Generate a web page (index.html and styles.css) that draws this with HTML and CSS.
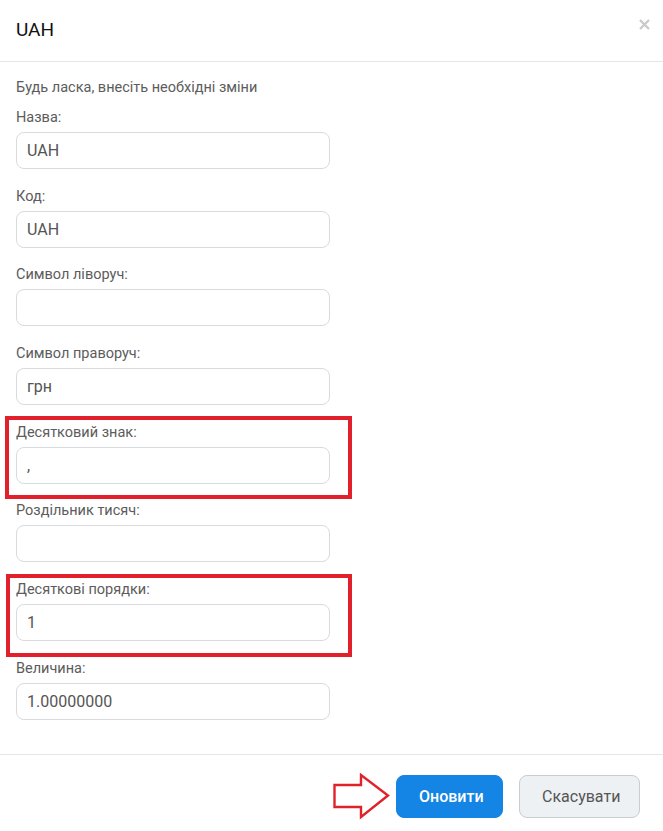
FILE: index.html
```html
<!DOCTYPE html>
<html lang="uk">
<head>
<meta charset="utf-8">
<title>UAH</title>
<link rel="stylesheet" href="styles.css">
</head>
<body>
<div class="modal">
  <div class="modal-header">
    <h4 class="modal-title">UAH</h4>
    <button class="close" type="button" aria-label="Close">
      <svg width="11" height="11" viewBox="0 0 11 11"><path d="M1 1L10 10M10 1L1 10" stroke="#c9c9c9" stroke-width="2.2" fill="none"/></svg>
    </button>
  </div>
  <div class="modal-body">
    <p class="intro">Будь ласка, внесіть необхідні зміни</p>
    <div class="field">
      <label>Назва:</label>
      <div class="input">UAH</div>
    </div>
    <div class="field">
      <label>Код:</label>
      <div class="input">UAH</div>
    </div>
    <div class="field">
      <label>Символ ліворуч:</label>
      <div class="input"></div>
    </div>
    <div class="field">
      <label>Символ праворуч:</label>
      <div class="input">грн</div>
    </div>
    <div class="field highlight">
      <label>Десятковий знак:</label>
      <div class="input">,</div>
    </div>
    <div class="field">
      <label>Роздільник тисяч:</label>
      <div class="input"></div>
    </div>
    <div class="field highlight second">
      <label>Десяткові порядки:</label>
      <div class="input">1</div>
    </div>
    <div class="field">
      <label>Величина:</label>
      <div class="input">1.00000000</div>
    </div>
  </div>
  <div class="modal-footer">
    <svg class="arrow" width="58" height="48" viewBox="0 0 58 48"><polygon points="1.5,12 28,12 28,2 55,22.5 28,44 28,34 1.5,34" fill="#fff" stroke="#e0232b" stroke-width="2.4" stroke-linejoin="miter"/></svg>
    <button class="btn btn-primary" type="button">Оновити</button>
    <button class="btn btn-secondary" type="button">Скасувати</button>
  </div>
</div>
</body>
</html>
```
FILE: styles.css
```css
* { box-sizing: border-box; }
html, body { margin: 0; padding: 0; background: #fff; }
body {
  font-family: Roboto, "Liberation Sans", Arial, sans-serif;
  color: #5a5a5a;
}
.modal { width: 663px; min-height: 831px; background: #fff; }
.modal-header {
  height: 62px;
  padding: 0 16px;
  display: flex;
  align-items: center;
  justify-content: space-between;
  border-bottom: 1px solid #e6e6e6;
}
.modal-title {
  margin: 0;
  font-size: 19px;
  font-weight: 400;
  color: #111;
  line-height: 24px;
  padding-bottom: 1px;
}
.close {
  border: 0;
  background: none;
  padding: 0;
  width: 11px;
  height: 11px;
  margin-right: -3px;
  margin-bottom: 12px;
  display: flex;
}
.modal-body { padding: 16px 16px 16px; }
.intro {
  margin: 0 0 10px;
  font-size: 14.5px;
  line-height: 20px;
  color: #5c5c5c;
}
.field {
  width: 314px;
  margin-bottom: 17.7px;
}
.field label {
  display: block;
  font-size: 14.5px;
  line-height: 20px;
  color: #5c5c5c;
  margin-bottom: 4px;
}
.input {
  height: 37px;
  border: 1px solid #d8dbde;
  border-radius: 8px;
  padding: 0 10px;
  display: flex;
  align-items: center;
  font-size: 16px;
  color: #555;
}
.highlight { position: relative; }
.highlight::after {
  content: "";
  position: absolute;
  top: -7px;
  left: -11px;
  right: -22px;
  bottom: -15px;
  border: 4px solid #e2202b;
  pointer-events: none;
}
.highlight.second::after { top: -6px; left: -10px; bottom: -16px; }
.modal-footer {
  border-top: 1px solid #e6e6e6;
  padding: 17px 23px 0 0;
  display: flex;
  justify-content: flex-end;
  align-items: center;
}
.arrow { margin-right: 5px; margin-top: 1px; }
.btn {
  height: 43px;
  border-radius: 8px;
  font-family: Roboto, "Liberation Sans", Arial, sans-serif;
  font-size: 16px;
  padding: 0 22px;
}
.btn-primary {
  background: #1485e5;
  border: 1px solid #1485e5;
  color: #fff;
  font-weight: 500;
  width: 107px;
}
.btn-secondary {
  margin-left: 16px;
  background: #eef1f4;
  border: 1px solid #c8cdd2;
  color: #555;
  width: 121px;
}
```
